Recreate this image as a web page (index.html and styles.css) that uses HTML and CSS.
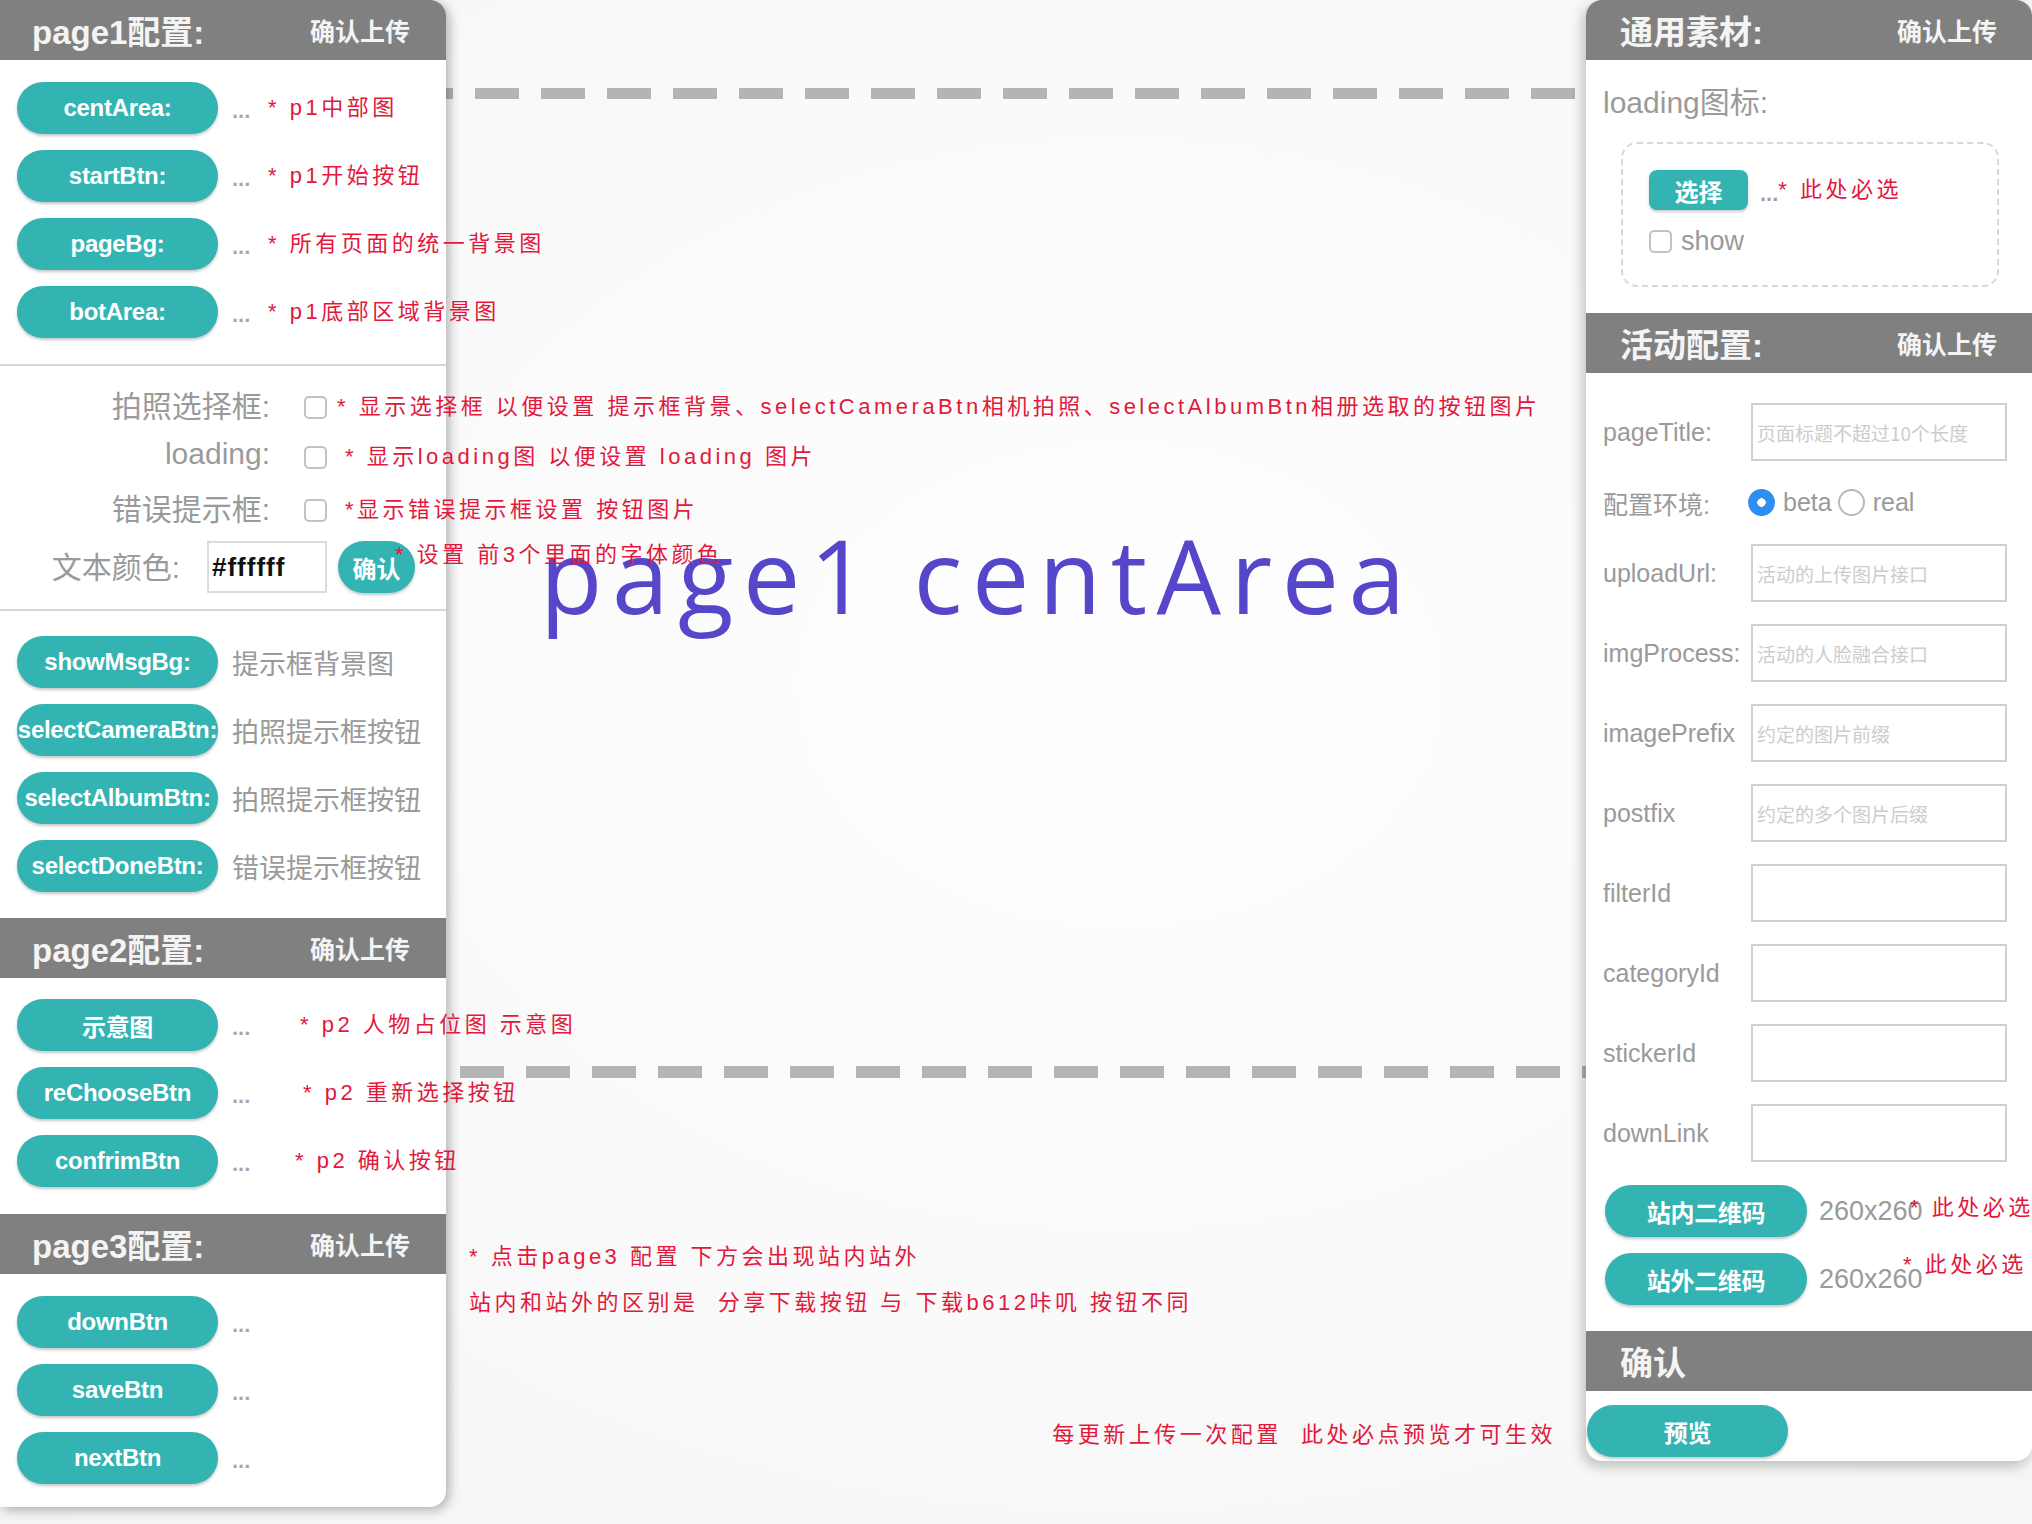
FILE: index.html
```html
<!DOCTYPE html>
<html lang="zh-CN">
<head>
<meta charset="utf-8">
<title>配置</title>
<link rel="stylesheet" href="styles.css">
</head>
<body>
<div class="app">
  <aside class="panel panel-left">
    <header class="panel-head head-first">
      <h2 class="head-title">page1配置:</h2>
      <span class="head-action">确认上传</span>
    </header>
    <div class="btn-list list-p1">
      <div class="item"><span class="pill">centArea:</span><span class="dots">...</span><span class="note">* p1中部图</span></div>
      <div class="item"><span class="pill">startBtn:</span><span class="dots">...</span><span class="note">* p1开始按钮</span></div>
      <div class="item"><span class="pill">pageBg:</span><span class="dots">...</span><span class="note">* 所有页面的统一背景图</span></div>
      <div class="item"><span class="pill">botArea:</span><span class="dots">...</span><span class="note">* p1底部区域背景图</span></div>
    </div>
    <div class="toggles">
      <div class="toggle-row">
        <label class="t-label">拍照选择框:</label><input type="checkbox" class="check">
        <span class="note note-t1">* 显示选择框 以便设置 提示框背景、selectCameraBtn相机拍照、selectAlbumBtn相册选取的按钮图片</span>
      </div>
      <div class="toggle-row">
        <label class="t-label">loading:</label><input type="checkbox" class="check">
        <span class="note note-t2">* 显示loading图 以便设置 loading 图片</span>
      </div>
      <div class="toggle-row tall">
        <label class="t-label">错误提示框:</label><input type="checkbox" class="check">
        <span class="note note-t2">*显示错误提示框设置 按钮图片</span>
      </div>
      <div class="color-row">
        <label class="c-label">文本颜色:</label>
        <input type="text" class="color-input" value="#ffffff">
        <span class="round-btn">确认</span>
        <span class="note color-note">* 设置 前3个里面的字体颜色</span>
      </div>
    </div>
    <div class="btn-list list-msg">
      <div class="item"><span class="pill">showMsgBg:</span><span class="desc">提示框背景图</span></div>
      <div class="item"><span class="pill">selectCameraBtn:</span><span class="desc">拍照提示框按钮</span></div>
      <div class="item"><span class="pill">selectAlbumBtn:</span><span class="desc">拍照提示框按钮</span></div>
      <div class="item"><span class="pill">selectDoneBtn:</span><span class="desc">错误提示框按钮</span></div>
    </div>
    <header class="panel-head">
      <h2 class="head-title">page2配置:</h2>
      <span class="head-action">确认上传</span>
    </header>
    <div class="btn-list list-p2">
      <div class="item"><span class="pill">示意图</span><span class="dots">...</span><span class="note note-p2a">* p2 人物占位图 示意图</span></div>
      <div class="item"><span class="pill">reChooseBtn</span><span class="dots">...</span><span class="note note-p2b">* p2 重新选择按钮</span></div>
      <div class="item"><span class="pill">confrimBtn</span><span class="dots">...</span><span class="note note-p2c">* p2 确认按钮</span></div>
    </div>
    <header class="panel-head">
      <h2 class="head-title">page3配置:</h2>
      <span class="head-action">确认上传</span>
    </header>
    <div class="btn-list list-p3">
      <div class="item"><span class="pill">downBtn</span><span class="dots">...</span></div>
      <div class="item"><span class="pill">saveBtn</span><span class="dots">...</span></div>
      <div class="item"><span class="pill">nextBtn</span><span class="dots">...</span></div>
    </div>
  </aside>

  <main class="stage">
    <div class="canvas">
      <h1 class="preview-title">page1 centArea</h1>
    </div>
    <p class="note stage-note">* 点击page3 配置 下方会出现站内站外</p>
    <p class="note stage-note stage-note2">站内和站外的区别是&nbsp; 分享下载按钮 与 下载b612咔叽 按钮不同</p>
    <p class="note stage-tip">每更新上传一次配置&nbsp; 此处必点预览才可生效</p>
  </main>

  <aside class="panel panel-right">
    <header class="panel-head head-first head-right">
      <h2 class="head-title">通用素材:</h2>
      <span class="head-action">确认上传</span>
    </header>
    <div class="asset">
      <div class="asset-label">loading图标:</div>
      <div class="asset-box">
        <div class="asset-row">
          <span class="select-btn">选择</span><span class="asset-dots">...</span><span class="note">* 此处必选</span>
        </div>
        <div class="show-row">
          <input type="checkbox" class="check check-show"><span class="show-text">show</span>
        </div>
      </div>
    </div>
    <header class="panel-head head-right">
      <h2 class="head-title">活动配置:</h2>
      <span class="head-action">确认上传</span>
    </header>
    <div class="form">
      <div class="form-row"><span class="f-label">pageTitle:</span><input class="field" placeholder="页面标题不超过10个长度"></div>
      <div class="form-row radio-row">
        <span class="f-label">配置环境:</span>
        <input type="radio" name="env" class="radio radio-first" checked><span class="radio-text">beta</span>
        <input type="radio" name="env" class="radio"><span class="radio-text">real</span>
      </div>
      <div class="form-row"><span class="f-label">uploadUrl:</span><input class="field" placeholder="活动的上传图片接口"></div>
      <div class="form-row"><span class="f-label">imgProcess:</span><input class="field" placeholder="活动的人脸融合接口"></div>
      <div class="form-row"><span class="f-label">imagePrefix</span><input class="field" placeholder="约定的图片前缀"></div>
      <div class="form-row"><span class="f-label">postfix</span><input class="field" placeholder="约定的多个图片后缀"></div>
      <div class="form-row"><span class="f-label">filterId</span><input class="field"></div>
      <div class="form-row"><span class="f-label">categoryId</span><input class="field"></div>
      <div class="form-row"><span class="f-label">stickerId</span><input class="field"></div>
      <div class="form-row"><span class="f-label">downLink</span><input class="field"></div>
    </div>
    <div class="qr-list">
      <div class="qr-row"><span class="pill">站内二维码</span><span class="size">260x260</span><span class="note qr-note">* 此处必选</span></div>
      <div class="qr-row"><span class="pill">站外二维码</span><span class="size">260x260</span><span class="note qr-note qr-note2">* 此处必选</span></div>
    </div>
    <header class="panel-head head-right">
      <h2 class="head-title">确认</h2>
    </header>
    <div class="preview-wrap">
      <span class="pill pill-preview">预览</span>
    </div>
  </aside>
</div>
</body>
</html>
```

FILE: styles.css
```css
* { box-sizing: border-box; }
html, body { margin: 0; padding: 0; }
body {
  width: 2032px;
  height: 1524px;
  overflow: hidden;
  background: radial-gradient(ellipse at 55% 45%, #fefefe 0%, #f9f9f9 60%, #f5f5f5 100%);
  font-family: "Liberation Sans", "Noto Sans CJK SC", sans-serif;
}
.app {
  display: flex;
  align-items: flex-start;
  height: 1524px;
}

/* panels */
.panel {
  position: relative;
  z-index: 2;
  flex: none;
  width: 446px;
  background: #fff;
}
.panel-left {
  border-radius: 0 16px 16px 0;
  box-shadow: 3px 3px 12px rgba(0, 0, 0, 0.3);
}
.panel-right {
  border-radius: 16px;
  padding-bottom: 4px;
  box-shadow: -3px 5px 14px rgba(0, 0, 0, 0.25);
}
.panel-head {
  display: flex;
  align-items: center;
  justify-content: space-between;
  height: 60px;
  padding: 0 36px 0 32px;
  background: #808080;
  color: #f4f4f4;
}
.panel-left .head-first { border-top-right-radius: 16px; }
.panel-right .head-first { border-radius: 16px 16px 0 0; }
.head-right { padding: 0 35px 0 34px; }
.head-title {
  margin: 0;
  font-size: 33px;
  font-weight: bold;
}
.head-action {
  font-size: 25px;
  font-weight: bold;
}

/* button lists */
.btn-list {
  display: flex;
  flex-direction: column;
  gap: 16px;
}
.list-p1 { padding: 22px 0 26px; border-bottom: 2px solid #d6d6d6; }
.list-msg { padding: 25px 0 26px; }
.list-p2 { padding: 21px 0 27px; }
.list-p3 { padding: 22px 0 23px; }
.item {
  display: flex;
  align-items: center;
  height: 52px;
  white-space: nowrap;
}
.pill {
  flex: none;
  display: flex;
  align-items: center;
  justify-content: center;
  width: 201px;
  height: 52px;
  margin-left: 17px;
  border-radius: 26px;
  background: #33b4b3;
  color: #fff;
  font-size: 24px;
  font-weight: bold;
  letter-spacing: -0.3px;
  white-space: nowrap;
  box-shadow: 0 2px 3px rgba(0, 0, 0, 0.22);
}
.dots {
  flex: none;
  width: 36px;
  margin-left: 14px;
  padding-top: 6px;
  font-size: 22px;
  font-weight: bold;
  color: #a8a8a8;
}
.desc {
  margin-left: 14px;
  font-size: 27px;
  color: #9a9a9a;
}
.note {
  color: #e2183c;
  font-family: "Liberation Sans", "Noto Sans CJK SC", sans-serif;
  font-size: 22px;
  line-height: 30px;
  letter-spacing: 3.5px;
  white-space: nowrap;
}
.note-p2a { margin-left: 32px; }
.note-p2b { margin-left: 35px; }
.note-p2c { margin-left: 27px; }

/* toggles */
.toggles {
  padding: 16px 0 13px;
  border-bottom: 2px solid #d6d6d6;
}
.toggle-row {
  display: flex;
  align-items: center;
  height: 50px;
  white-space: nowrap;
}
.toggle-row.tall { height: 56px; }
.t-label {
  flex: none;
  width: 270px;
  margin-top: -7px;
  text-align: right;
  font-size: 30px;
  color: #9a9a9a;
}
.check {
  appearance: none;
  -webkit-appearance: none;
  flex: none;
  width: 23px;
  height: 23px;
  margin: 0 0 0 34px;
  border: 2px solid #c2c2c2;
  border-radius: 5px;
  background: #fff;
}
.note-t1 { margin-left: 10px; }
.note-t2 { margin-left: 18px; }
.color-row {
  position: relative;
  display: flex;
  align-items: center;
  height: 58px;
}
.c-label {
  flex: none;
  width: 180px;
  margin-top: -5px;
  text-align: right;
  font-size: 30px;
  color: #9a9a9a;
}
.color-input {
  flex: none;
  width: 120px;
  height: 52px;
  margin: 0 0 0 27px;
  padding: 0 0 0 3px;
  border: 2px solid #dcdcdc;
  font-family: "Liberation Sans", sans-serif;
  font-size: 26px;
  font-weight: bold;
  letter-spacing: 1px;
  color: #111;
  outline: none;
}
.round-btn {
  flex: none;
  display: flex;
  align-items: center;
  justify-content: center;
  width: 77px;
  height: 52px;
  margin-left: 11px;
  border-radius: 26px;
  background: #33b4b3;
  color: #fff;
  font-size: 24px;
  font-weight: bold;
  box-shadow: 0 2px 3px rgba(0, 0, 0, 0.22);
}
.color-note {
  position: absolute;
  left: 395px;
  top: 2px;
}

/* stage */
.stage {
  position: relative;
  z-index: 1;
  flex: 1;
  min-width: 0;
  height: 1524px;
  display: flex;
  flex-direction: column;
}
.canvas {
  height: 990px;
  margin: 88px -52px 0;
  padding: 436px 0 0 146px;
  background:
    repeating-linear-gradient(90deg, #b4b4b4 0 44px, transparent 44px 66px) 15px 0 / 100% 11px no-repeat,
    repeating-linear-gradient(90deg, #b4b4b4 0 44px, transparent 44px 66px) 0 100% / 100% 12px no-repeat;
}
.preview-title {
  margin: 0;
  font-family: "Open Sans", sans-serif;
  font-size: 102px;
  line-height: 102px;
  font-weight: 400;
  letter-spacing: 9.5px;
  color: #5646c9;
  white-space: nowrap;
}
.stage-note {
  margin: 164px 0 0 23px;
}
.stage-note2 { margin-top: 16px; }
.stage-tip {
  align-self: flex-end;
  margin: 102px 30px 0 0;
}

/* right panel */
.asset { padding: 23px 0 26px; }
.asset-label {
  margin: 0 0 19px 17px;
  font-size: 30px;
  line-height: 40px;
  color: #9a9a9a;
}
.asset-box {
  width: 378px;
  height: 145px;
  margin-left: 35px;
  padding: 26px 0 0 26px;
  border: 2px dashed #d8d8d8;
  border-radius: 16px;
}
.asset-row {
  display: flex;
  align-items: center;
  height: 40px;
  white-space: nowrap;
}
.select-btn {
  flex: none;
  display: flex;
  align-items: center;
  justify-content: center;
  width: 99px;
  height: 40px;
  border-radius: 8px;
  background: #33b4b3;
  color: #fff;
  font-size: 24px;
  font-weight: bold;
  box-shadow: 0 2px 3px rgba(0, 0, 0, 0.2);
}
.asset-dots {
  margin-left: 12px;
  padding-top: 8px;
  font-size: 22px;
  font-weight: bold;
  color: #a0a0a0;
}
.show-row {
  display: flex;
  align-items: center;
  height: 30px;
  margin-top: 16px;
}
.check-show { margin-left: 0; }
.show-text {
  margin-left: 9px;
  font-size: 27px;
  color: #9a9a9a;
}
.form {
  display: flex;
  flex-direction: column;
  gap: 22px;
  padding-top: 30px;
}
.form-row {
  display: flex;
  align-items: center;
  height: 58px;
  white-space: nowrap;
}
.radio-row { height: 39px; }
.f-label {
  flex: none;
  width: 165px;
  padding-left: 17px;
  font-size: 25px;
  color: #9a9a9a;
}
.field {
  flex: none;
  width: 256px;
  height: 58px;
  margin: 0;
  padding: 0 0 0 4px;
  border: 2px solid #d0d0d0;
  font-family: "Noto Sans CJK SC", sans-serif;
  font-size: 19px;
  outline: none;
}
.field::placeholder { color: #cccccc; }
.radio {
  appearance: none;
  -webkit-appearance: none;
  flex: none;
  width: 27px;
  height: 27px;
  margin: 0;
  border: 2px solid #b8b8b8;
  border-radius: 50%;
  background: #fff;
}
.radio-first { margin-left: -3px; }
.radio:checked {
  border: none;
  background: radial-gradient(circle, #fff 0 4px, #2e8ef2 4.5px);
}
.radio-text {
  margin: 0 6px 0 8px;
  font-size: 25px;
  color: #9a9a9a;
}
.qr-list {
  display: flex;
  flex-direction: column;
  gap: 16px;
  padding: 23px 0 26px;
}
.qr-row {
  position: relative;
  display: flex;
  align-items: center;
  height: 52px;
  white-space: nowrap;
}
.qr-row .pill {
  width: 202px;
  margin-left: 19px;
}
.size {
  margin-left: 12px;
  font-size: 27px;
  color: #9a9a9a;
}
.qr-note {
  position: absolute;
  left: 324px;
  top: 8px;
}
.qr-note2 {
  left: 317px;
  top: -3px;
}
.preview-wrap { padding-top: 14px; }
.pill-preview { margin-left: 1px; }
```
